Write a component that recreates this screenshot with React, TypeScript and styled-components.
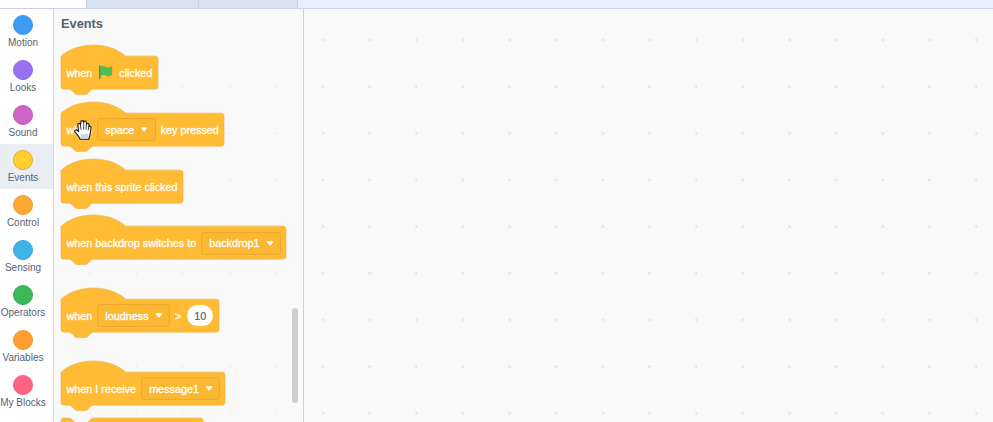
import React from 'react'
import styled, { createGlobalStyle } from 'styled-components'

const GlobalStyle = createGlobalStyle`
  html, body { margin: 0; padding: 0; background: #fff; }
  body { font-family: "Liberation Sans", Arial, sans-serif; }
`

const Page = styled.div`
  width: 993px;
  height: 422px;
  overflow: hidden;
  display: flex;
  flex-direction: column;
`

const TabBar = styled.div`
  height: 8px;
  flex: none;
  display: flex;
  background: #e6f0fe;
  border-bottom: 1px solid #c8d3e0;
`

const Tab = styled.div<{ $width: number; $active?: boolean }>`
  width: ${(p) => p.$width}px;
  flex: none;
  box-sizing: border-box;
  background: ${(p) => (p.$active ? '#fff' : '#d8e3ef')};
  border-right: 1px solid #c8d3e0;
`

const Main = styled.div`
  flex: 1;
  min-height: 0;
  display: flex;
`

const Sidebar = styled.div`
  width: 54px;
  flex: none;
  box-sizing: border-box;
  background: #fff;
  border-right: 1px solid #d9d9d9;
`

const CategoryItem = styled.div<{ $selected?: boolean }>`
  height: 45px;
  box-sizing: border-box;
  padding: 6px 7px 0 0;
  display: flex;
  flex-direction: column;
  align-items: center;
  background: ${(p) => (p.$selected ? '#e9eef2' : 'transparent')};
`

const CategoryDot = styled.div<{ $fill: string; $edge: string }>`
  width: 20px;
  height: 20px;
  flex: none;
  box-sizing: border-box;
  border-radius: 50%;
  background: ${(p) => p.$fill};
  border: 1px solid ${(p) => p.$edge};
`

const CategoryLabel = styled.div`
  margin-top: 2px;
  font-size: 10px;
  line-height: 12px;
  color: #575e75;
  white-space: nowrap;
`

const Palette = styled.div`
  position: relative;
  width: 250px;
  flex: none;
  box-sizing: border-box;
  overflow: hidden;
  padding: 7px 0 0 7px;
  border-right: 1px solid #d0d0d0;
  background-color: #f9f9f9;
  background-image: radial-gradient(circle at center, #efefef 0, #efefef 1px, transparent 1.4px);
  background-size: 46.67px 46.67px;
  background-position: 12.33px 7.67px;
`

const PaletteTitle = styled.div`
  font-size: 12.8px;
  font-weight: 700;
  line-height: 16px;
  color: #575e75;
  margin-bottom: 13.3px;
`

const Scrollbar = styled.div`
  position: absolute;
  left: 238px;
  top: 299px;
  width: 6px;
  height: 95px;
  border-radius: 3px;
  background: #cecece;
`

const Workspace = styled.div`
  flex: 1;
  background-color: #f9f9f9;
  background-image: radial-gradient(circle at center, #e2e2e2 0, #e2e2e2 1px, transparent 1.4px);
  background-size: 46.67px 46.67px;
  background-position: -4.33px 7.67px;
`

const BlockWrap = styled.div<{ $width: number; $gap: number }>`
  position: relative;
  width: ${(p) => p.$width}px;
  height: 50px;
  margin-bottom: ${(p) => p.$gap}px;
`

const BlockShape = styled.svg`
  position: absolute;
  left: 0;
  top: 0;
  overflow: visible;
`

const BlockRow = styled.div`
  position: relative;
  box-sizing: border-box;
  height: 44.4px;
  padding: 11.4px 5px 0 5.5px;
  display: flex;
  align-items: center;
  gap: 5px;
  font-size: 10.8px;
  font-weight: 500;
  color: #fff;
  white-space: nowrap;
  -webkit-text-stroke: 0.3px #fff;
`

const Dropdown = styled.div`
  height: 23px;
  box-sizing: border-box;
  padding: 0 6.5px 0 7px;
  display: flex;
  align-items: center;
  gap: 6px;
  border: 1px solid #eca92c;
  border-radius: 3px;
  background: #fab832;
`

const NumberPill = styled.div`
  width: 26px;
  height: 21px;
  margin-left: 1px;
  border-radius: 11px;
  background: #fff;
  color: #575e75;
  -webkit-text-stroke: 0.2px #575e75;
  display: flex;
  align-items: center;
  justify-content: center;
`

const StackWrap = styled.div`
  position: relative;
  width: 142px;
  height: 33px;
`

const HandCursor = styled.svg`
  position: absolute;
  left: 20px;
  top: 111px;
`

const S = 0.675

const hatPath = (width: number) => {
  const w = width / S
  const h = 33 / S
  return `M0 16.5 c25 -22 71 -22 96 0 H${w - 4} a4 4 0 0 1 4 4 V${16.5 + h - 4} a4 4 0 0 1 -4 4 H48 c-2 0 -3 1 -4 2 l-4 4 c-1 1 -2 2 -4 2 h-12 c-2 0 -3 -1 -4 -2 l-4 -4 c-1 -1 -2 -2 -4 -2 H4 a4 4 0 0 1 -4 -4 Z`
}

const stackPath = (width: number) => {
  const w = width / S
  const h = 33 / S
  return `M0 4 a4 4 0 0 1 4 -4 H12 c2 0 3 1 4 2 l4 4 c1 1 2 2 4 2 h12 c2 0 3 -1 4 -2 l4 -4 c1 -1 2 -2 4 -2 H${w - 4} a4 4 0 0 1 4 4 V${h} H0 Z`
}

const Hat: React.FC<{ width: number; gap: number; children: React.ReactNode }> = ({ width, gap, children }) => (
  <BlockWrap $width={width} $gap={gap}>
    <BlockShape width={width} height={50}>
      <path d={hatPath(width)} transform={`scale(${S})`} fill="#ffbb33" stroke="#f3b552" strokeWidth="1" />
    </BlockShape>
    <BlockRow>{children}</BlockRow>
  </BlockWrap>
)

const Caret = () => (
  <svg width="8" height="5" viewBox="0 0 8 5">
    <path d="M0.8 0.6 H7.2 L4.6 4 Q4 4.6 3.4 4 Z" fill="#fff" stroke="#fff" strokeWidth="0.6" strokeLinejoin="round" />
  </svg>
)

const Menu: React.FC<{ label: string }> = ({ label }) => (
  <Dropdown>
    {label}
    <Caret />
  </Dropdown>
)

const GreenFlag = () => (
  <svg width="17" height="16" viewBox="0 0 17 16">
    <path d="M2.8 1 V13.6" stroke="#45993d" strokeWidth="1.5" strokeLinecap="round" />
    <path
      d="M3 2.2 C5.2 0.6 7.2 1.2 8.8 2.2 C10.4 3.2 12.4 3.2 14.8 1.6 V9.8 C12.4 11.4 10.4 11.2 8.8 10.2 C7.2 9.2 5.2 9 3 10.4 Z"
      fill="#4cbf56"
      stroke="#45993d"
      strokeWidth="0.4"
    />
  </svg>
)

const Hand = () => (
  <HandCursor width="18" height="20" viewBox="0 0 18 20">
    <path
      d="M5.6 18 C4.4 15.8 3 14.4 1.2 12.4 C0 10.8 1.6 9.2 3 10.2 L4.6 11.6 L3.8 5 C3.6 3.2 6 2.8 6.4 4.6 L6.8 2 C7 0.2 9.4 0.2 9.6 2 L9.8 2 C10.2 0.4 12.4 0.8 12.4 2.6 L12.4 4.4 C13 2.8 15.2 3.4 15 5 L14.8 6.8 C15.4 5.8 17.2 6.2 17 7.8 L16.4 13 C16.2 15 15.4 16.6 15 18 V19.2 H6 Z"
      fill="#fff"
      stroke="#10141c"
      strokeWidth="1.1"
      strokeLinejoin="round"
    />
    <path d="M6.4 4.6 L7 9.6 M9.7 2 V9.6 M12.4 4.4 L12 9.6 M14.8 6.8 L14.2 10.4" stroke="#10141c" strokeWidth="0.8" fill="none" />
    <path d="M6.4 13.4 C8 15 11 15 14.4 13 L14 18.4 H7 Z" fill="#c9d6ee" />
  </HandCursor>
)

const categories = [
  { name: 'Motion', fill: '#3d9bf3', edge: '#3a90e4' },
  { name: 'Looks', fill: '#9b70f0', edge: '#8f66e4' },
  { name: 'Sound', fill: '#d163c7', edge: '#c45abb' },
  { name: 'Events', fill: '#ffd02f', edge: '#e6a82a', selected: true },
  { name: 'Control', fill: '#ffa733', edge: '#f09c2c' },
  { name: 'Sensing', fill: '#3fb4e8', edge: '#3a9fe0' },
  { name: 'Operators', fill: '#3bb858', edge: '#36a850' },
  { name: 'Variables', fill: '#ff9d2e', edge: '#f29328' },
  { name: 'My Blocks', fill: '#ff6384', edge: '#f55a7c' },
]

const App: React.FC = () => (
  <Page>
    <GlobalStyle />
    <TabBar>
      <Tab $width={87} $active />
      <Tab $width={112} />
      <Tab $width={99} />
    </TabBar>
    <Main>
      <Sidebar>
        {categories.map((c) => (
          <CategoryItem key={c.name} $selected={c.selected}>
            <CategoryDot $fill={c.fill} $edge={c.edge} />
            <CategoryLabel>{c.name}</CategoryLabel>
          </CategoryItem>
        ))}
      </Sidebar>
      <Palette>
        <PaletteTitle>Events</PaletteTitle>
        <Hat width={97} gap={6.7}>
          when
          <GreenFlag />
          clicked
        </Hat>
        <Hat width={163} gap={6.7}>
          when
          <Menu label="space" />
          key pressed
        </Hat>
        <Hat width={122} gap={6.7}>
          when this sprite clicked
        </Hat>
        <Hat width={225} gap={22.7}>
          when backdrop switches to
          <Menu label="backdrop1" />
        </Hat>
        <Hat width={158} gap={23}>
          when
          <Menu label="loudness" />
          &gt;
          <NumberPill>10</NumberPill>
        </Hat>
        <Hat width={164} gap={7.3}>
          when I receive
          <Menu label="message1" />
        </Hat>
        <StackWrap>
          <BlockShape width={142} height={33}>
            <path d={stackPath(142)} transform={`scale(${S})`} fill="#ffbb33" stroke="#f3b552" strokeWidth="1" />
          </BlockShape>
        </StackWrap>
        <Hand />
        <Scrollbar />
      </Palette>
      <Workspace />
    </Main>
  </Page>
)

export default App
